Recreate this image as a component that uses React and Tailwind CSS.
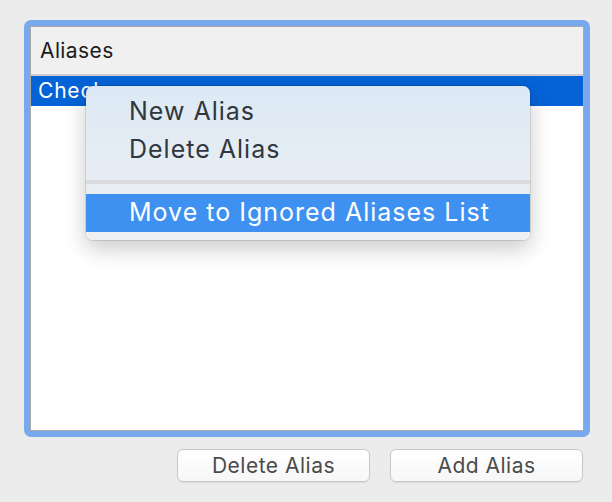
import React from 'react'

const font = { fontFamily: 'Inter, "Liberation Sans", sans-serif' }

const ContextMenu = () => (
  <div className="absolute left-[86px] top-[86px] w-[444px] rounded-[7px] bg-gradient-to-b from-[#dce9f5] to-[#eff0f2] pt-[7px] pb-[8px] shadow-[0_8px_22px_rgba(0,0,0,0.22),0_0_0_1px_rgba(0,0,0,0.10)]">
    <div className="h-[38px] pl-[43px] flex items-center text-[25px] tracking-[1px] text-[#30373d]">New Alias</div>
    <div className="h-[38px] pl-[43px] flex items-center text-[25px] tracking-[1px] text-[#30373d]">Delete Alias</div>
    <div className="pt-[11px] pb-[10px]">
      <div className="h-[4px] bg-[#dadbdf]" />
    </div>
    <div className="h-[38px] pl-[43px] flex items-center text-[25px] tracking-[1px] text-white bg-[#3e90f1]">
      Move to Ignored Aliases List
    </div>
  </div>
)

export default function App() {
  return (
    <div className="relative w-[612px] h-[502px] bg-[#ececec] pt-[20px] pl-[24px]" style={font}>
      {/* table with focus ring */}
      <div className="w-[566px] h-[417px] rounded-[7px] bg-[#79a9ed] p-[6px]">
        <div className="h-full flex flex-col border border-[#a9a9a9] bg-white">
          <div className="h-[49px] flex items-center pl-[9px] bg-[#f0f0f0] border-b-2 border-[#cecece] text-[21px] tracking-[0.4px] text-[#1c1c1c]">
            Aliases
          </div>
          <div className="h-[30px] flex items-center pl-[7px] bg-[#0563d7] text-[21px] tracking-[0.8px] text-white">
            Check
          </div>
          <div className="flex-1" />
        </div>
      </div>

      {/* buttons */}
      <div className="w-[566px] flex justify-end gap-[20px] pr-[7px] mt-[12px]">
        <button className="w-[193px] h-[33px] rounded-[6px] border border-[#c9c9c9] bg-gradient-to-b from-white to-[#f7f7f7] text-[21px] tracking-[0.5px] text-[#4b4b4b] shadow-[0_1px_1px_rgba(0,0,0,0.08)]">
          Delete Alias
        </button>
        <button className="w-[193px] h-[33px] rounded-[6px] border border-[#c9c9c9] bg-gradient-to-b from-white to-[#f7f7f7] text-[21px] tracking-[0.5px] text-[#4b4b4b] shadow-[0_1px_1px_rgba(0,0,0,0.08)]">
          Add Alias
        </button>
      </div>

      <ContextMenu />
    </div>
  )
}
